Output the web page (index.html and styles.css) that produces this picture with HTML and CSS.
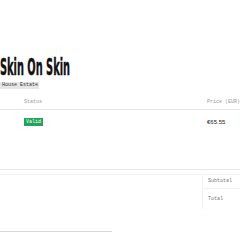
FILE: index.html
```html
<!DOCTYPE html>
<html lang="en">
<head>
    <meta charset="UTF-8">
    <meta name="viewport" content="width=device-width, initial-scale=1.0">
    <title>Skin On Skin</title>
    <link rel="stylesheet" href="styles.css">
</head>
<body>
    <div class="page">
        <h1 class="title">Skin On Skin</h1>
        <span class="tag">House Estate</span>

        <div class="table">
            <div class="row head">
                <div class="cell first"></div>
                <div class="cell status">Status</div>
                <div class="cell price">Price (EUR)</div>
            </div>
            <div class="row item">
                <div class="cell first"></div>
                <div class="cell status"><span class="badge">Valid</span></div>
                <div class="cell price">€65.55</div>
            </div>
        </div>

        <!-- 合計 -->
        <div class="summary">
            <div class="sum-row">
                <div class="sum-label">Subtotal</div>
            </div>
            <div class="sum-row last">
                <div class="sum-label">Total</div>
            </div>
        </div>

        <div class="bottom-bar"></div>
    </div>
</body>
</html>
```

FILE: styles.css
```css
body {
    margin: 0;
    background: #fff;
    font-family: "Liberation Mono", "DejaVu Sans Mono", monospace;
    color: #222;
    overflow: hidden;
}
.page {
    padding-top: 56px;
    width: 240px;
}
.title {
    margin: 0;
    font-family: "Liberation Sans Narrow", "DejaVu Sans Condensed", sans-serif;
    font-weight: bold;
    font-size: 22.5px;
    line-height: 22px;
    color: #111;
    transform: scaleX(0.485);
    transform-origin: left center;
    white-space: nowrap;
    -webkit-text-stroke: 0.4px #111;
}
.tag {
    display: block;
    width: 39px;
    margin-top: 4px;
    background: #e6e6e6;
    font-size: 5px;
    line-height: 7px;
    padding-left: 2px;
    box-sizing: border-box;
    color: #333;
}
.table {
    margin-top: 7px;
}
.row {
    display: flex;
}
.row.head {
    height: 13px;
    border-bottom: 1px solid #e4e4e4;
    font-size: 5px;
    color: #999;
    line-height: 13px;
}
.row.item {
    height: 60px;
    border-bottom: 1px solid #e8e8e8;
    padding-top: 8px;
    box-sizing: border-box;
    font-size: 5px;
    line-height: 8px;
}
.cell.first {
    width: 24px;
}
.cell.status {
    flex: 1;
}
.cell.price {
    width: 33px;
}
.row.item .price {
    font-family: "Liberation Sans", Arial, sans-serif;
    font-size: 6px;
    line-height: 8px;
    color: #222;
    padding-left: 2px;
}
.badge {
    display: inline-block;
    vertical-align: top;
    background: #21a35b;
    color: #fff;
    font-size: 5px;
    line-height: 8px;
    padding: 0 2px;
}
.summary {
    margin-top: 4px;
    border-top: 1px solid #f3f3f3;
}
.sum-row {
    margin-left: 202px;
    border-left: 1px solid #f2f2f2;
    border-bottom: 1px solid #f2f2f2;
    height: 13px;
    padding-left: 5px;
    font-size: 5px;
    line-height: 13px;
    color: #777;
}
.sum-row.last {
    border-bottom: none;
    height: 20px;
    line-height: 20px;
}
.bottom-bar {
    margin-top: 22px;
    width: 112px;
    height: 1px;
    background: #d8d8d8;
}
```
